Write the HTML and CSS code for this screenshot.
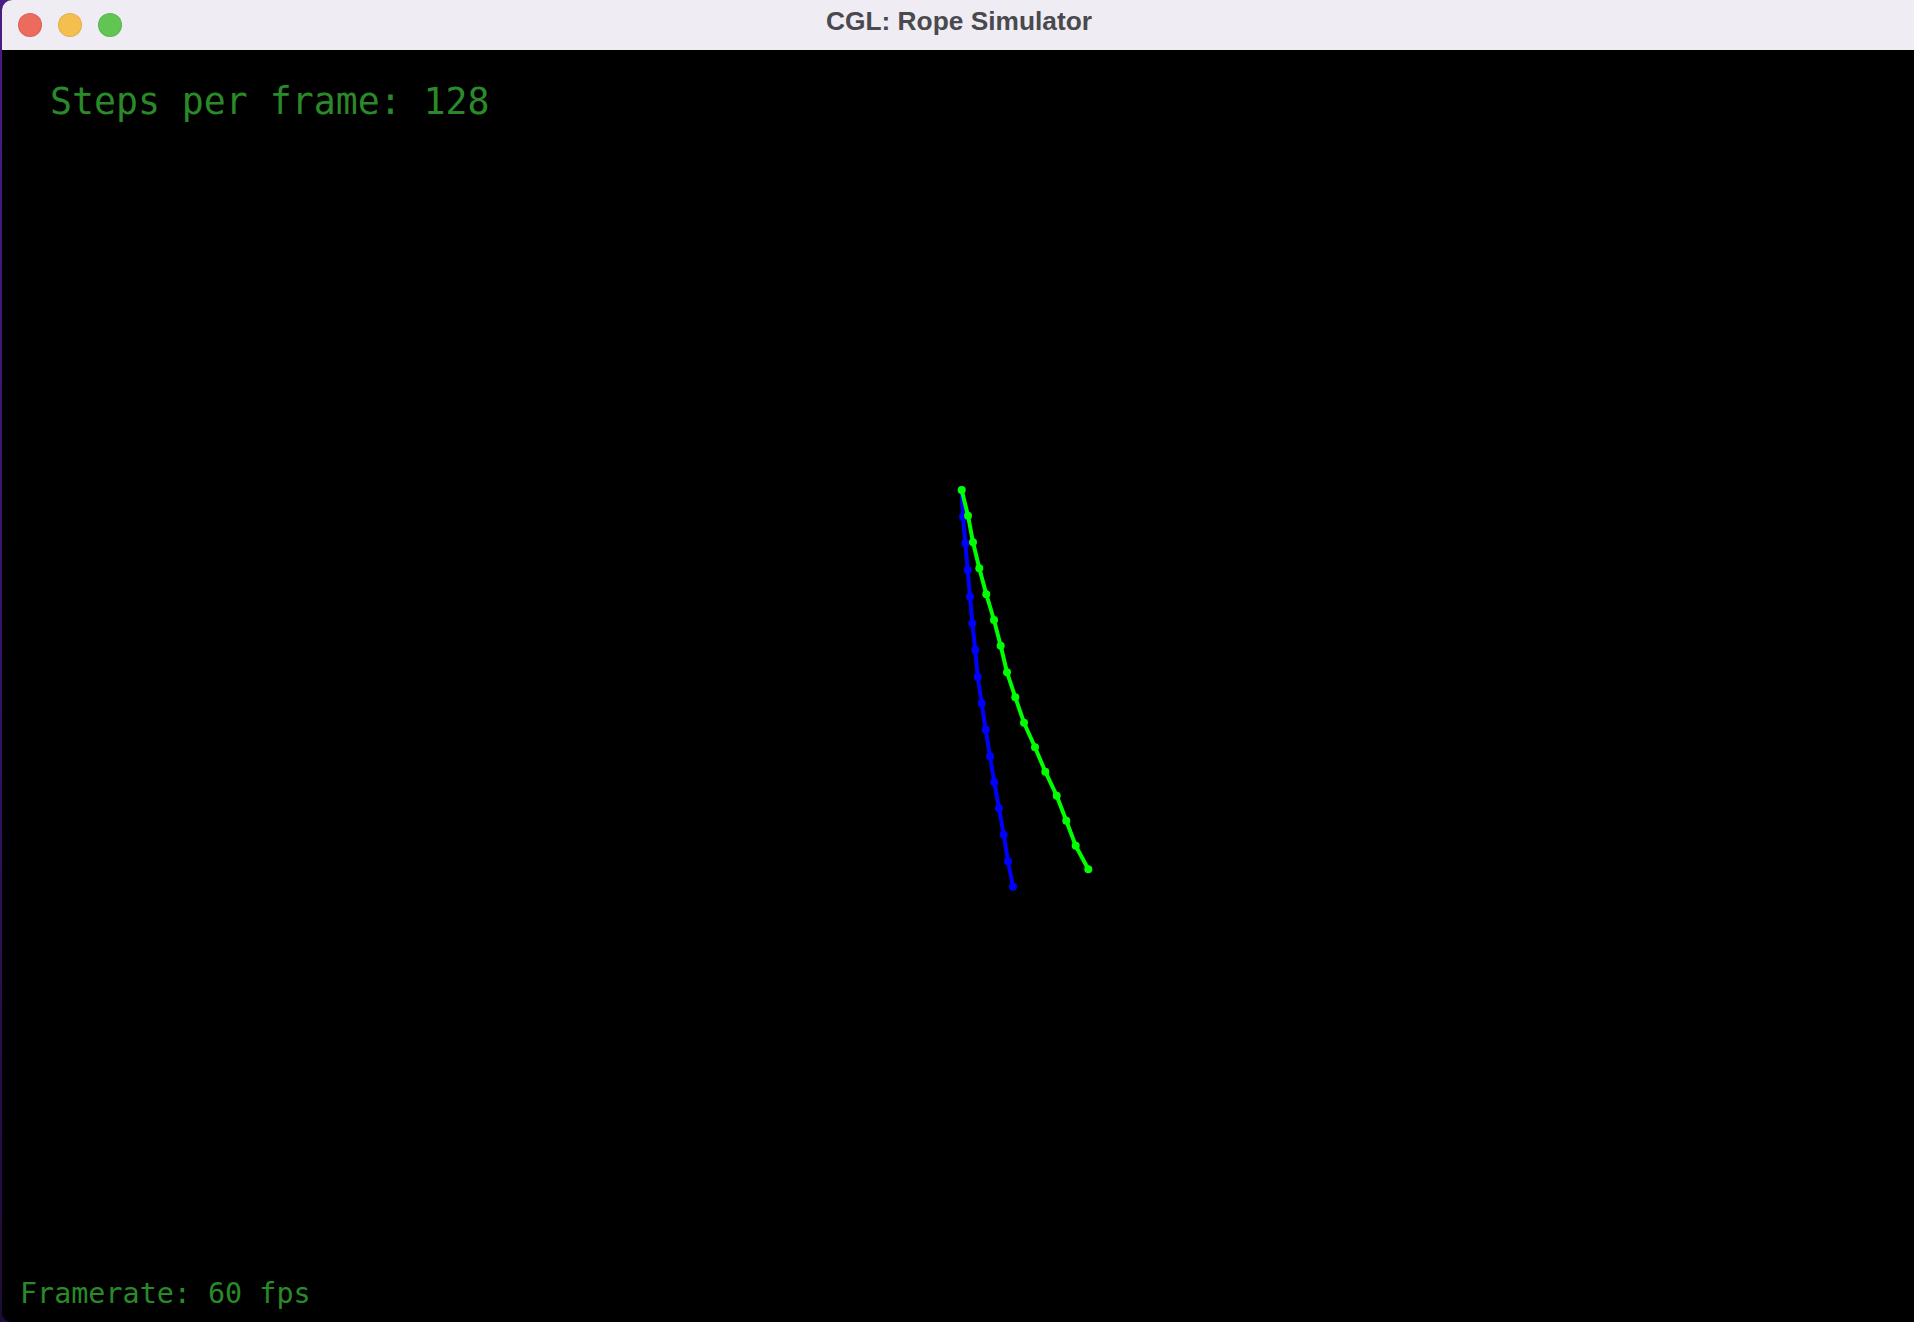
FILE: index.html
```html
<!DOCTYPE html>
<html>
<head>
<meta charset="utf-8">
<link rel="stylesheet" href="styles.css">
<title>CGL: Rope Simulator</title>
</head>
<body>
<div class="window">
  <div class="titlebar">
    <div class="lights">
      <span class="light red"></span>
      <span class="light yellow"></span>
      <span class="light green"></span>
    </div>
    <div class="title">CGL: Rope Simulator</div>
  </div>
  <div class="viewport">
    <svg class="scene" viewBox="2 50 1912 1272" width="1912" height="1272">
      <g class="rope blue">
        <polyline points="961.7,490 963,516.7 965.3,543.3 967.7,570 970,596.7 972.3,623.3 975.3,650 977.7,676.7 981.7,703.3 985.7,729.7 990,756.3 994.3,782.3 999,808.3 1003.7,834.7 1008,861.3 1013,886.7"/>
        <circle cx="961.7" cy="490" r="4"/><circle cx="963" cy="516.7" r="4"/><circle cx="965.3" cy="543.3" r="4"/><circle cx="967.7" cy="570" r="4"/><circle cx="970" cy="596.7" r="4"/><circle cx="972.3" cy="623.3" r="4"/><circle cx="975.3" cy="650" r="4"/><circle cx="977.7" cy="676.7" r="4"/><circle cx="981.7" cy="703.3" r="4"/><circle cx="985.7" cy="729.7" r="4"/><circle cx="990" cy="756.3" r="4"/><circle cx="994.3" cy="782.3" r="4"/><circle cx="999" cy="808.3" r="4"/><circle cx="1003.7" cy="834.7" r="4"/><circle cx="1008" cy="861.3" r="4"/><circle cx="1013" cy="886.7" r="4"/>
      </g>
      <g class="rope green">
        <polyline points="961.7,490 968,515.7 973,542.3 979.3,568.3 986.3,594.3 994,620 1000.7,645.7 1007,672.3 1015.3,697.3 1024,722.7 1035,747.3 1045.3,771.7 1056.7,795.7 1066.3,820.7 1075.7,845.7 1088.3,869.3"/>
        <circle cx="961.7" cy="490" r="4"/><circle cx="968" cy="515.7" r="4"/><circle cx="973" cy="542.3" r="4"/><circle cx="979.3" cy="568.3" r="4"/><circle cx="986.3" cy="594.3" r="4"/><circle cx="994" cy="620" r="4"/><circle cx="1000.7" cy="645.7" r="4"/><circle cx="1007" cy="672.3" r="4"/><circle cx="1015.3" cy="697.3" r="4"/><circle cx="1024" cy="722.7" r="4"/><circle cx="1035" cy="747.3" r="4"/><circle cx="1045.3" cy="771.7" r="4"/><circle cx="1056.7" cy="795.7" r="4"/><circle cx="1066.3" cy="820.7" r="4"/><circle cx="1075.7" cy="845.7" r="4"/><circle cx="1088.3" cy="869.3" r="4"/>
      </g>
    </svg>
    <div class="hud steps">Steps per frame: 128</div>
    <div class="hud fps">Framerate: 60 fps</div>
  </div>
</div>
</body>
</html>
```

FILE: styles.css
```css
html, body {
  margin: 0;
  padding: 0;
  width: 1914px;
  height: 1322px;
  overflow: hidden;
}
body {
  background: linear-gradient(to bottom, #4a1c86 0%, #3a1670 40%, #1c0c3a 100%);
  display: flex;
}
.window {
  margin-left: 2px;
  flex: 1;
  display: flex;
  flex-direction: column;
  border-radius: 10px 0 0 10px;
  overflow: hidden;
  background: #000;
}
.titlebar {
  height: 50px;
  flex: none;
  background: #efecf4;
  position: relative;
  display: flex;
  align-items: center;
}
.lights {
  display: flex;
  gap: 16px;
  padding-left: 16px;
}
.light {
  width: 24px;
  height: 24px;
  border-radius: 50%;
  box-sizing: border-box;
  border: 1px solid rgba(0,0,0,0.08);
}
.light.red { background: #ec6a5e; }
.light.yellow { background: #f5bf4f; }
.light.green { background: #61c554; }
.title {
  position: absolute;
  left: 0;
  right: 0;
  top: 0;
  bottom: 0;
  display: flex;
  align-items: center;
  justify-content: center;
  font-family: "Liberation Sans", Arial, sans-serif;
  font-weight: bold;
  font-size: 26.3px;
  color: #4a494d;
  padding-left: 2px;
  padding-bottom: 8px;
}
.viewport {
  flex: 1;
  position: relative;
  display: flex;
  flex-direction: column;
  background: #000;
}
.scene {
  position: absolute;
  left: 0;
  top: 0;
}
.rope polyline {
  fill: none;
  stroke-width: 4;
  stroke-linejoin: round;
  stroke-linecap: round;
}
.rope.blue polyline { stroke: #0000ff; }
.rope.blue circle { fill: #0000ff; }
.rope.green polyline { stroke: #00ff00; }
.rope.green circle { fill: #00ff00; }
.hud {
  position: relative;
  font-family: "DejaVu Sans Mono", "Liberation Mono", monospace;
  color: #2a8a2a;
  line-height: 1;
  white-space: pre;
}
.steps {
  font-size: 36.5px;
  padding-top: 34px;
  padding-left: 48px;
}
.fps {
  font-size: 28.4px;
  margin-top: auto;
  padding-left: 18px;
  padding-bottom: 14px;
}
```
